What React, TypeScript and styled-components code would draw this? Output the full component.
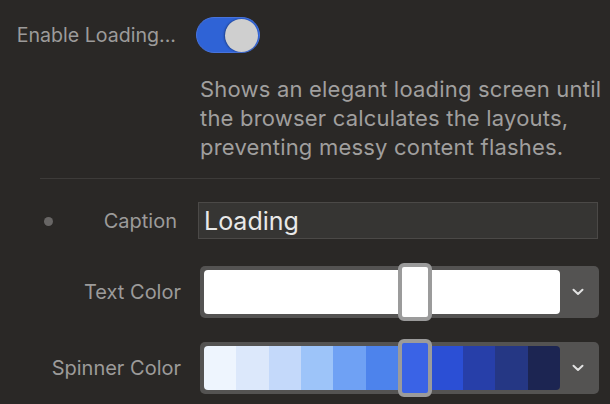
import React from "react";
import styled, { createGlobalStyle } from "styled-components";

const GlobalStyle = createGlobalStyle`
  html, body {
    margin: 0;
    padding: 0;
    background: #2a2826;
  }
  body {
    font-family: Inter, "Noto Sans", "Liberation Sans", sans-serif;
    -webkit-font-smoothing: antialiased;
  }
`;

const Panel = styled.div`
  width: 610px;
  height: 404px;
  overflow: hidden;
  box-sizing: border-box;
  padding-top: 17px;
  display: flex;
  flex-direction: column;
`;

const Row = styled.div<{ $gap: number }>`
  display: flex;
  align-items: center;
  margin-top: ${(p) => p.$gap}px;
`;

const LabelCell = styled.div<{ $pad?: number; $size?: number }>`
  position: relative;
  width: 181px;
  flex: none;
  box-sizing: border-box;
  padding-right: ${(p) => p.$pad ?? 0}px;
  text-align: right;
  font-size: ${(p) => p.$size ?? 20}px;
  color: #9c9b9a;
  white-space: nowrap;
`;

const Dot = styled.span`
  position: absolute;
  left: 44px;
  top: 50%;
  width: 9px;
  height: 9px;
  margin-top: -4px;
  border-radius: 50%;
  background: #686665;
`;

const Switch = styled.div`
  margin-left: 15px;
  width: 64px;
  height: 36px;
  box-sizing: border-box;
  border-radius: 18px;
  background: #2f63d6;
  border: 1px solid #4773dc;
  display: flex;
  align-items: center;
  justify-content: flex-end;
  padding-right: 1px;
`;

const Knob = styled.div`
  width: 33px;
  height: 33px;
  border-radius: 50%;
  background: #cfcfcf;
  box-shadow: -1px 0 2px rgba(0, 0, 0, 0.35);
`;

const Description = styled.p`
  margin: 22px 0 0 200px;
  width: 405px;
  font-size: 22px;
  letter-spacing: 0.2px;
  line-height: 29px;
  color: #a09f9e;
`;

const Divider = styled.hr`
  margin: 16px 10px 0 40px;
  border: none;
  height: 1px;
  background: #3d3b39;
`;

const TextInput = styled.div`
  margin-left: 17px;
  width: 400px;
  height: 37px;
  box-sizing: border-box;
  background: #363533;
  border: 1px solid #4b4947;
  display: flex;
  align-items: center;
  padding-left: 5px;
  font-size: 25px;
  color: #e8e8e8;
`;

const SwatchBox = styled.div`
  margin-left: 19px;
  width: 399px;
  height: 52px;
  box-sizing: border-box;
  padding: 4px;
  border-radius: 5px;
  background: #545352;
  display: flex;
  align-items: stretch;
`;

const Strip = styled.div`
  position: relative;
  width: 356px;
  display: flex;
`;

const Cell = styled.div<{ $first?: boolean; $last?: boolean }>`
  flex: 1;
  border-radius: ${(p) =>
    p.$first ? "4px 0 0 4px" : p.$last ? "0 4px 4px 0" : "0"};
`;

const Thumb = styled.div`
  position: absolute;
  top: -7px;
  bottom: -7px;
  box-sizing: border-box;
  border: 4px solid #9b9b9b;
  border-radius: 6px;
`;

const Chevron = styled.div`
  flex: 1;
  display: flex;
  align-items: center;
  justify-content: center;
  padding-left: 1px;
`;

const ChevronIcon = () => (
  <svg width="12" height="8" viewBox="0 0 12 8" fill="none">
    <path
      d="M1.5 1.8 L6 6 L10.5 1.8"
      stroke="#e2e2e2"
      strokeWidth="2"
      strokeLinecap="round"
      strokeLinejoin="round"
    />
  </svg>
);

const WHITE = Array(11).fill("#ffffff");
const BLUES = [
  "#eef5fe",
  "#dce8fb",
  "#c4d9fa",
  "#9dc4f9",
  "#6fa1f4",
  "#4d83ec",
  "#3a63e6",
  "#2b4fd5",
  "#273fa9",
  "#253784",
  "#1c2552",
];

const ColorScale = ({ colors, selected }: { colors: string[]; selected: number }) => {
  const step = 100 / colors.length;
  return (
    <SwatchBox>
      <Strip>
        {colors.map((c, i) => (
          <Cell
            key={i}
            $first={i === 0}
            $last={i === colors.length - 1}
            style={{ background: c }}
          />
        ))}
        <Thumb
          style={{
            left: `calc(${selected * step}% - 0.5px)`,
            width: `calc(${step}% + 1.5px)`,
            background: colors[selected],
          }}
        />
      </Strip>
      <Chevron>
        <ChevronIcon />
      </Chevron>
    </SwatchBox>
  );
};

export default function App() {
  return (
    <>
      <GlobalStyle />
      <Panel>
        <Row $gap={0}>
          <LabelCell $pad={5} $size={19.6}>
            Enable Loading...
          </LabelCell>
          <Switch>
            <Knob />
          </Switch>
        </Row>
        <Description>
          Shows an elegant loading screen until the browser calculates the
          layouts, preventing messy content flashes.
        </Description>
        <Divider />
        <Row $gap={23}>
          <LabelCell $pad={4}>
            <Dot />
            Caption
          </LabelCell>
          <TextInput>Loading</TextInput>
        </Row>
        <Row $gap={27}>
          <LabelCell>Text Color</LabelCell>
          <ColorScale colors={WHITE} selected={6} />
        </Row>
        <Row $gap={24}>
          <LabelCell>Spinner Color</LabelCell>
          <ColorScale colors={BLUES} selected={6} />
        </Row>
      </Panel>
    </>
  );
}
